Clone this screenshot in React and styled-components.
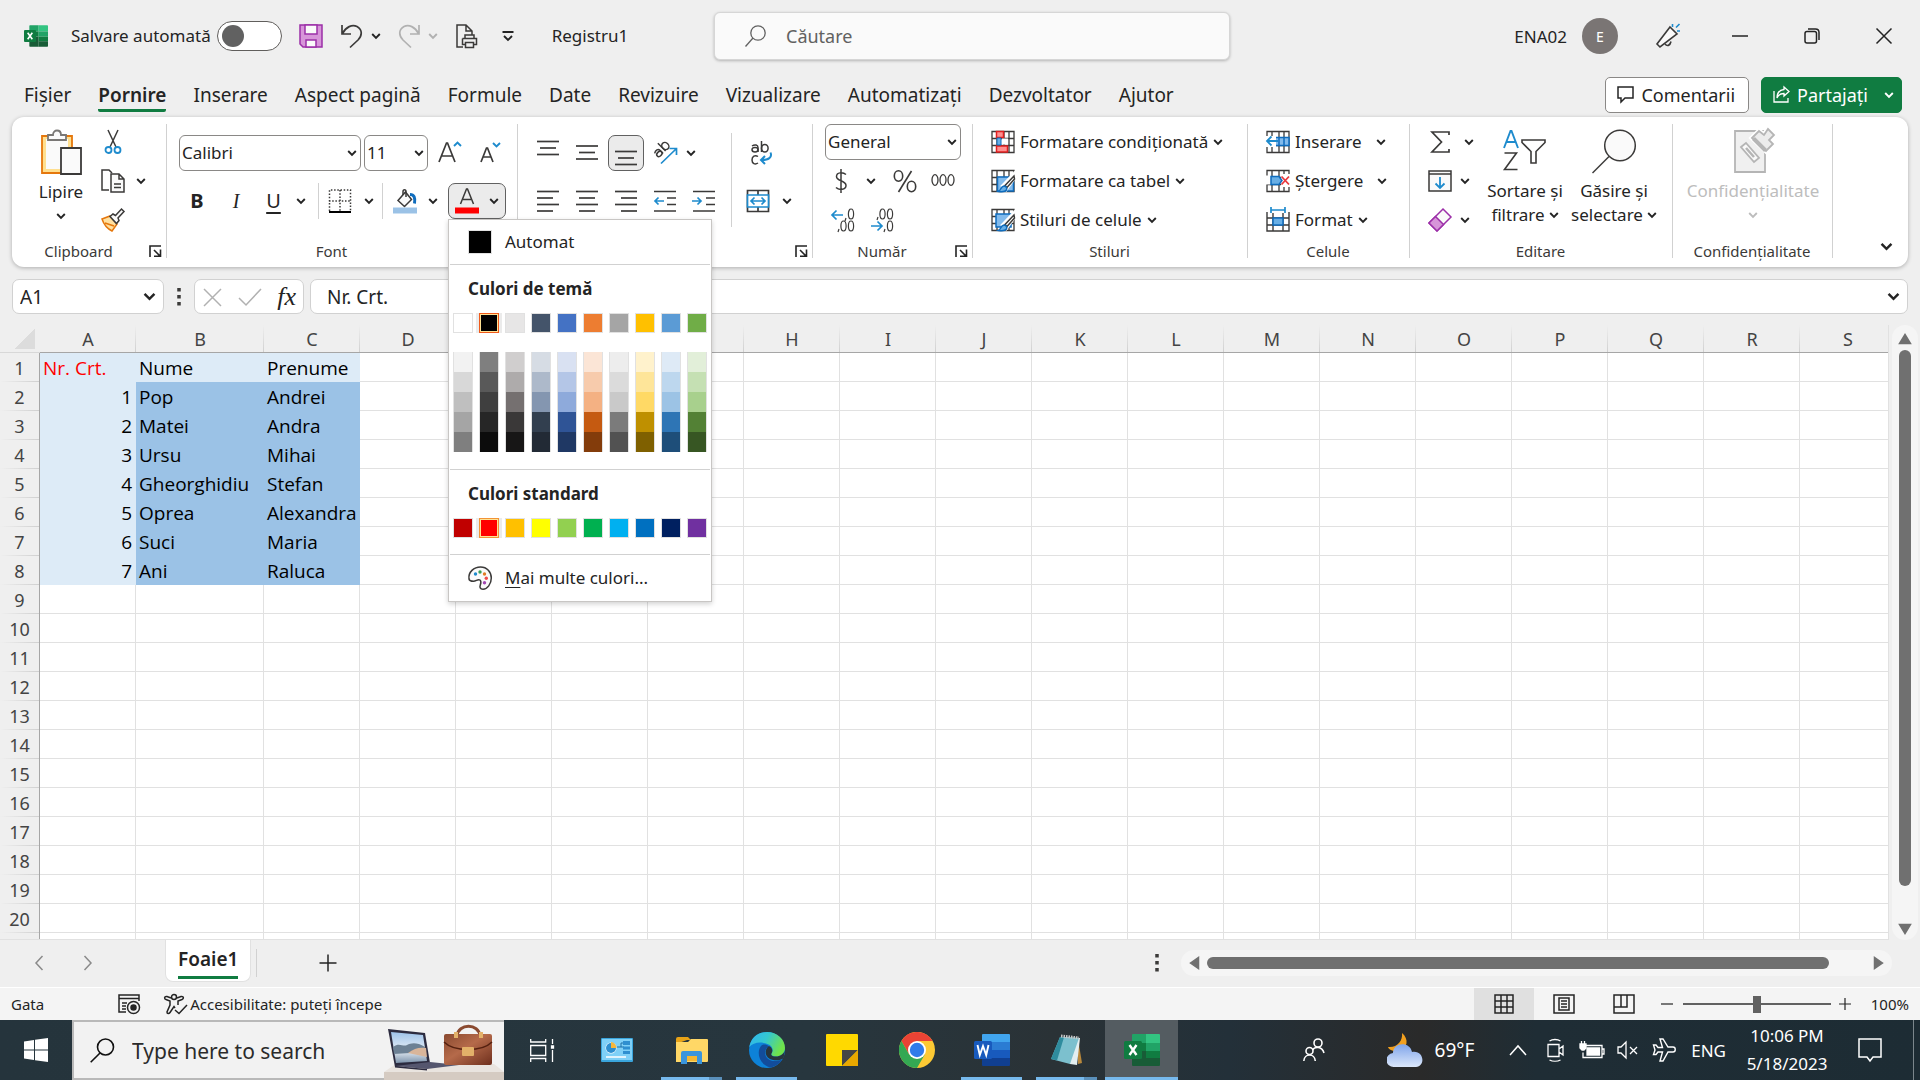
import React from "react";
import styled, { createGlobalStyle, css } from "styled-components";

const UI = '"Noto Sans", "Open Sans", sans-serif';
const CELL = '"Open Sans", "Noto Sans", sans-serif';
const INK = "#3b3a39";
const BLUE = "#1e8bcd";

const Global = createGlobalStyle`
  *, *::before, *::after { box-sizing: border-box; }
  body { margin: 0; background: #efefef; font-family: ${UI}; color: #242424; }
  button, input, select { font: inherit; color: inherit; margin: 0; padding: 0; border: 0; background: none; }
  svg { display: block; flex: none; }
`;

/* ---------- shell ---------- */
const Shell = styled.div`
  display: flex;
  flex-direction: column;
  height: 100vh;
  overflow: hidden;
`;
const Svg = styled.svg`
  fill: none;
  stroke: ${(p) => p.$c || INK};
  stroke-width: ${(p) => p.$sw || 1.5};
  overflow: visible;
`;
const Ico = ({ w = 24, h = w, vb, c, sw, children }) => (
  <Svg width={w} height={h} viewBox={vb || `0 0 ${w} ${h}`} $c={c} $sw={sw} aria-hidden="true">{children}</Svg>
);
const Chev = ({ c = "#242424", big }) => (
  <Ico w={big ? 13 : 10} h={big ? 13 : 10} vb="0 0 10 10" c={c} sw={1.9}><path d="M1.2 3l3.8 3.8L8.8 3" /></Ico>
);

/* ---------- title bar ---------- */
const TitleBar = styled.header`
  display: grid;
  grid-template-columns: minmax(0, 714fr) minmax(0, 516fr) minmax(0, 690fr);
  height: 72px;
  flex: none;
  align-items: center;
`;
const TitleLeft = styled.div`
  display: flex;
  align-items: center;
  padding-left: 24px;
  gap: 16px;
  font-size: 17px;
  line-height: 24px;
  white-space: nowrap;
`;
const AutoSave = styled.label`
  display: flex;
  align-items: center;
  gap: 6px;
  padding-left: 7px;
`;
const Toggle = styled.input`
  appearance: none;
  width: 65px;
  height: 30px;
  border: 1px solid #605e5c;
  border-radius: 15px;
  background: #fff;
  display: flex;
  align-items: center;
  padding: 0 4px;
  &::before { content: ""; width: 22px; height: 22px; border-radius: 50%; background: #616161; }
`;
const IconButton = styled.button`
  display: flex;
  align-items: center;
  justify-content: center;
  gap: ${(p) => p.$gap ?? 7}px;
  min-width: ${(p) => p.$w ?? 24}px;
  height: ${(p) => p.$h ?? 36}px;
  flex: none;
`;
const DocName = styled.span`padding-left: 16px;`;
const SearchBox = styled.label`
  display: flex;
  align-items: center;
  gap: 20px;
  height: 48px;
  padding-left: 30px;
  border: 1px solid #d6d6d6;
  border-radius: 6px;
  background: #fafafa;
  box-shadow: 0 1px 3px rgba(0, 0, 0, 0.25);
  input { flex: 1; min-width: 0; font-size: 18px; outline: 0; }
  input::placeholder { color: #616161; opacity: 1; }
`;
const TitleRight = styled.div`
  display: flex;
  align-items: center;
  justify-content: flex-end;
  padding-right: 24px;
  font-size: 17px;
  gap: 48px;
`;
const Account = styled.div`
  display: flex;
  align-items: center;
  gap: 15px;
  margin-right: -10px;
`;
const Avatar = styled.span`
  display: grid;
  place-items: center;
  width: 36px;
  height: 36px;
  border-radius: 50%;
  background: #7a7574;
  color: #fff;
  font-size: 14px;
`;

/* ---------- ribbon tabs ---------- */
const TabRow = styled.div`
  display: flex;
  align-items: center;
  height: 45px;
  flex: none;
  padding: 0 18px 0 11px;
`;
const Tabs = styled.nav`
  display: flex;
  flex: 1;
`;
const Tab = styled.button`
  padding: 4px 14px 0 13px;
  height: 40px;
  font-size: 19px;
  line-height: 28px;
  white-space: nowrap;
  font-weight: ${(p) => (p.$on ? 600 : 400)};
  span { display: block; border-bottom: 3px solid ${(p) => (p.$on ? "#107c41" : "transparent")}; border-radius: 2px; }
`;
const Actions = styled.div`
  display: flex;
  gap: 12px;
`;
const Action = styled.button`
  display: flex;
  align-items: center;
  gap: 7px;
  height: 36px;
  padding: 0 ${(p) => (p.$green ? 7 : 13)}px 0 11px;
  border: 1px solid ${(p) => (p.$green ? "#107c41" : "#8a8886")};
  border-radius: 5px;
  background: ${(p) => (p.$green ? "#107c41" : "#fff")};
  color: ${(p) => (p.$green ? "#fff" : "#242424")};
  font-size: 18px;
  svg:last-child:not(:first-child) { margin-left: 9px; }
`;

/* ---------- ribbon ---------- */
const Ribbon = styled.section`
  display: flex;
  flex: none;
  margin: 0 12px;
  padding: 5px 0 7px;
  border-radius: 12px;
  background: #fff;
  box-shadow: 0 1px 4px rgba(0, 0, 0, 0.28);
  font-size: 17px;
  line-height: 24px;
`;
const Group = styled.div`
  display: flex;
  flex-direction: column;
  height: 138px;
  width: ${(p) => p.$w}px;
  flex: none;
  background: linear-gradient(#d1d1d1, #d1d1d1) right 2px / 1px 134px no-repeat;
`;
const GroupBody = styled.div`
  display: flex;
  height: 120px;
  padding-left: ${(p) => p.$pl || 0}px;
`;
const GroupFoot = styled.div`
  display: grid;
  grid-template-columns: 1fr ${(p) => (p.$plain ? 0 : 20)}px;
  align-items: center;
  height: 18px;
  padding-right: 2px;
  font-size: 15px;
  line-height: 18px;
  color: #3b3a39;
  text-align: center;
`;
const Launcher = () => (
  <IconButton $w={14} $h={14} aria-label="Opțiuni">
    <Ico w={13} h={12} sw={1.6} c="#242424"><path d="M1 12V1h11M5 5l6 6M11.5 4.5v6.8H5" /></Ico>
  </IconButton>
);
const Col = styled.div`
  display: flex;
  flex-direction: column;
  padding-top: ${(p) => p.$pt || 0}px;
  gap: ${(p) => p.$gap || 0}px;
  margin-left: ${(p) => p.$ml || 0}px;
`;
const Line = styled.div`
  display: flex;
  align-items: center;
  height: ${(p) => p.$h || 39}px;
  gap: ${(p) => p.$gap ?? 3}px;
`;
const BigButton = styled.button`
  display: flex;
  flex-direction: column;
  align-items: center;
  width: ${(p) => p.$w}px;
  padding-top: 7px;
  color: ${(p) => (p.$off ? "#bdbdbd" : "#242424")};
  line-height: 24px;
  white-space: nowrap;
  > svg { margin-bottom: ${(p) => p.$mb ?? 6}px; }
`;
const BigLine = styled.span`
  display: flex;
  align-items: center;
  gap: 4px;
  height: 24px;
`;
const TextButton = styled.button`
  display: flex;
  align-items: center;
  height: 39px;
  gap: 5px;
  white-space: nowrap;
  svg:last-child { margin-left: ${(p) => p.$cg || 0}px; }
`;
const Letter = styled.span`
  font-size: 20px;
  line-height: 26px;
  ${(p) => p.$b && css`font-weight: 700;`}
  ${(p) => p.$i && css`font-style: italic; font-family: "Liberation Serif", serif;`}
  ${(p) => p.$u && css`text-decoration: underline; text-underline-offset: 4px;`}
`;
const SelectWrap = styled.div`
  display: grid;
  align-items: center;
  width: ${(p) => p.$w}px;
  height: 36px;
  border: 1px solid #8a8886;
  border-radius: 6px;
  select { grid-area: 1 / 1; appearance: none; height: 34px; padding-left: 2px; outline: 0; }
  svg { grid-area: 1 / 1; justify-self: end; margin-right: 3px; pointer-events: none; }
`;
const Select = ({ w, label, value }) => (
  <SelectWrap $w={w}>
    <select aria-label={label} defaultValue={value}><option>{value}</option></select>
    <Chev />
  </SelectWrap>
);
const Rule = styled.i`
  width: 1px;
  height: ${(p) => p.$h || 36}px;
  background: #d1d1d1;
  margin: ${(p) => p.$m || "0"};
`;
const Gap = styled.i`width: ${(p) => p.$w}px; flex: none;`;
const Boxed = styled(IconButton)`
  border: 1px solid #616161;
  border-radius: 7px;
  background: #ebebeb;
`;
const Fill = styled.div`flex: 1;`;
const Collapse = styled.button`
  align-self: flex-end;
  margin: 0 15px 7px 0;
`;

/* ---------- colour menu ---------- */
const MenuAnchor = styled.div`position: relative;`;
const Menu = styled.div`
  position: absolute;
  top: 36px;
  left: 0;
  z-index: 10;
  width: 264px;
  border: 1px solid #c8c6c4;
  background: #fff;
  box-shadow: 0 2px 5px rgba(0, 0, 0, 0.18);
  font-size: 17px;
`;
const MenuItem = styled.button`
  display: flex;
  align-items: center;
  gap: 13px;
  width: 100%;
  height: ${(p) => p.$h}px;
  padding-left: 19px;
  ${(p) => p.$ruled && css`background: linear-gradient(#d1d1d1, #d1d1d1) center top / 260px 1px no-repeat;`}
  u { text-underline-offset: 3px; }
`;
const AutoSwatch = styled.i`
  width: 24px;
  height: 24px;
  border: 1px solid #e1e1e1;
  background: #000;
`;
const MenuPart = styled.div`
  margin: 0 1px;
  padding: 0 3px ${(p) => p.$pb}px;
  border-top: 1px solid #d1d1d1;
`;
const MenuHead = styled.h3`
  margin: 0;
  padding-left: 15px;
  font-size: 17px;
  line-height: 48px;
  font-weight: 700;
`;
const Swatches = styled.div`
  display: grid;
  grid-template-columns: repeat(10, 20px);
  gap: 0 6px;
  margin-top: ${(p) => p.$mt || 0}px;
`;
const Swatch = styled.button`
  height: 20px;
  border: 1px solid #e1e1e1;
  border-width: ${(p) => (p.$tint ? "0 1px" : "1px")};
  background: ${(p) => p.$c};
  ${(p) => p.$on && css`
    border-color: ${p.$on};
    box-shadow: inset 0 0 0 1px #ffe294, -3px 0 0 #ebebeb, 3px 0 0 #ebebeb;
  `}
`;
const THEME = ["#ffffff", "#000000", "#e7e6e6", "#44546a", "#4472c4", "#ed7d31", "#a5a5a5", "#ffc000", "#5b9bd5", "#70ad47"];
const TINTS = [
  ["#f2f2f2", "#7f7f7f", "#d0cece", "#d6dce4", "#d9e1f2", "#fbe5d6", "#ededed", "#fff2cc", "#deeaf6", "#e2efd9"],
  ["#d8d8d8", "#595959", "#aeabab", "#adb9ca", "#b4c6e7", "#f7cbac", "#dbdbdb", "#fee599", "#bdd7ee", "#c5e0b3"],
  ["#bfbfbf", "#3f3f3f", "#757070", "#8496b0", "#8eaadb", "#f4b183", "#c9c9c9", "#ffd965", "#9cc3e5", "#a8d08d"],
  ["#a5a5a5", "#262626", "#3a3838", "#323f4f", "#2f5496", "#c55a11", "#7b7b7b", "#bf9000", "#2e75b5", "#538135"],
  ["#7f7f7f", "#0c0c0c", "#171616", "#222a35", "#1f3864", "#833c0b", "#525252", "#7f6000", "#1e4e79", "#375623"],
];
const STANDARD = ["#c00000", "#ff0000", "#ffc000", "#ffff00", "#92d050", "#00b050", "#00b0f0", "#0070c0", "#002060", "#7030a0"];

const ColorMenu = () => (
  <Menu>
    <MenuItem $h={44}><AutoSwatch />Automat</MenuItem>
    <MenuPart $pb={17}>
      <MenuHead>Culori de temă</MenuHead>
      <Swatches>{THEME.map((c, i) => <Swatch key={c} $c={c} $on={i === 1 && "#f05a1a"} aria-label={c} />)}</Swatches>
      <Swatches $mt={19}>{TINTS.flat().map((c, i) => <Swatch key={i} $tint $c={c} aria-label={c} />)}</Swatches>
    </MenuPart>
    <MenuPart $pb={16}>
      <MenuHead>Culori standard</MenuHead>
      <Swatches>{STANDARD.map((c, i) => <Swatch key={c} $c={c} $on={i === 1 && "#f29436"} aria-label={c} />)}</Swatches>
    </MenuPart>
    <MenuItem $h={47} $ruled>
      <Ico>
        <path fill="#fafafa" d="M1 13C0 6 6 1 12.500 1C19 1 23.300 6 23.300 12c0 6-4 11.200-8.300 11.200-3 0-3.500-2-2.700-4.200.8-2.300 1-4-.3-5-2-1.500-4 1.300-6.500 1.200C3 15.200 1.300 14.700 1 13z" />
        <g stroke="none"><circle cx="7.500" cy="8" r="1.700" fill={BLUE} /><circle cx="12" cy="6" r="1.700" fill="#3a9e55" /><circle cx="16.500" cy="8" r="1.700" fill="#e07b24" /><circle cx="18.300" cy="12.300" r="1.700" fill="#ef4b4b" /><circle cx="16.500" cy="16.800" r="1.700" fill="#a348b3" /></g>
      </Ico>
      <span><u>M</u>ai multe culori...</span>
    </MenuItem>
  </Menu>
);

/* ---------- formula bar ---------- */
const FormulaRow = styled.div`
  display: flex;
  align-items: center;
  flex: none;
  height: 35px;
  margin: 12px 12px 11px;
  font-size: 19px;
`;
const Field = styled.div`
  display: flex;
  align-items: center;
  justify-content: space-between;
  height: 35px;
  border: 1px solid #d1d1d1;
  border-radius: 7px;
  background: #fff;
  padding: 0 7px;
  ${(p) => (p.$w ? css`width: ${p.$w}px;` : css`flex: 1; padding-left: 16px;`)}
  input { flex: 1; min-width: 0; outline: 0; }
`;
const Fx = styled.span`
  font: italic 26px/30px "Liberation Serif", serif;
`;

/* ---------- sheet ---------- */
const SheetArea = styled.main`
  display: flex;
  flex: 1;
  min-height: 0;
`;
const GridClip = styled.div`
  flex: 1;
  min-width: 0;
  overflow: hidden;
  border-right: 1px solid #e1e1e1;
  border-bottom: 1px solid #e1e1e1;
  background: #fff;
`;
const Sheet = styled.table`
  table-layout: fixed;
  width: 1896px;
  border-collapse: separate;
  border-spacing: 0;
  font-family: ${CELL};
`;
const HeadCell = styled.th`
  height: 28px;
  padding: 2px 0 0;
  background: linear-gradient(to top, #d0d0d0, #efefef) right / 1px 100% no-repeat, #efefef;
  border-bottom: 1px solid #a6a6a6;
  font: 400 18px/25px ${UI};
  color: #444;
`;
const Corner = styled(HeadCell)`
  background: linear-gradient(135deg, transparent 50%, #dcdcdc 50%) 15px 4px / 20px 20px no-repeat, #efefef;
  border-bottom-color: #d8d8d8;
`;
const RowHead = styled.th`
  height: 29px;
  padding: 0;
  background: linear-gradient(to left, #d0d0d0, #efefef) bottom / 100% 1px no-repeat, #efefef;
  border-right: 1px solid #a6a6a6;
  font: 400 18px/26px ${UI};
  color: #444;
`;
const Cell = styled.td`
  height: 29px;
  padding: 2px 3px 0 3px;
  border-right: 1px solid ${(p) => p.$bg || "#e1e1e1"};
  border-bottom: 1px solid ${(p) => p.$bg || "#e1e1e1"};
  background: ${(p) => p.$bg || "#fff"};
  color: ${(p) => p.$fg || "#000"};
  text-align: ${(p) => (p.$num ? "right" : "left")};
  font-size: 19px;
  line-height: 25px;
  white-space: nowrap;
  overflow: visible;
`;
const COLS = "ABCDEFGHIJKLMNOPQRS".split("");
const DATA = [
  ["Nr. Crt.", "Nume", "Prenume"], [1, "Pop", "Andrei"], [2, "Matei", "Andra"], [3, "Ursu", "Mihai"],
  [4, "Gheorghidiu", "Stefan"], [5, "Oprea", "Alexandra"], [6, "Suci", "Maria"], [7, "Ani", "Raluca"],
];
const bgOf = (r, c) => (r > 7 || c > 2 ? undefined : r === 0 || c === 0 ? "#ddebf7" : "#9bc2e6");

const VScroll = styled.div`
  display: flex;
  flex-direction: column;
  align-items: center;
  gap: 5px;
  width: 26px;
  margin: 0 2px 0 3px;
  padding: 8px 0 5px;
  border-radius: 13px;
  background: #f5f5f5;
`;
const Thumb = styled.div`
  background: #707070;
  border-radius: 6px;
  ${(p) => (p.$h ? css`height: 12px; flex: 622;` : css`width: 12px; flex: 536;`)}
`;
const Rest = styled.div`flex: ${(p) => p.$f};`;

/* ---------- bottom bars ---------- */
const SheetBar = styled.div`
  display: flex;
  align-items: center;
  flex: none;
  height: 48px;
  border-bottom: 1px solid #fff;
  padding: 0 28px 2px 27px;
`;
const SheetTab = styled.button`
  align-self: flex-start;
  height: 42px;
  margin-left: 40px;
  padding: 1px 12px 0;
  border: 1px solid #e1e1e1;
  border-top: 0;
  border-radius: 0 0 8px 8px;
  background: #fff;
  font-size: 19px;
  line-height: 33px;
  font-weight: 600;
  span { display: block; border-bottom: 3px solid #107c41; }
`;
const HScroll = styled.div`
  display: flex;
  align-items: center;
  gap: 7px;
  height: 26px;
  width: 711px;
  padding: 0 8px;
  margin-left: 2px;
  border-radius: 13px;
  background: #f5f5f5;
`;
const Status = styled.footer`
  display: flex;
  align-items: center;
  flex: none;
  height: 32px;
  padding: 0 11px;
  background: #f4f4f4;
  font-size: 15px;
  white-space: nowrap;
`;
const ViewButton = styled(IconButton)`
  width: 60px;
  height: 32px;
  background: ${(p) => (p.$on ? "#e0e0e0" : "transparent")};
`;
const Zoom = styled.input`
  appearance: none;
  width: 148px;
  height: 18px;
  margin: 0 8px;
  background: linear-gradient(#616161, #616161) center / 100% 2px no-repeat;
  &::-webkit-slider-thumb { appearance: none; width: 8px; height: 17px; background: #616161; }
`;

/* ---------- taskbar ---------- */
const Taskbar = styled.nav`
  display: flex;
  align-items: center;
  flex: none;
  height: 60px;
  background: linear-gradient(90deg, #25343c 0, #27363e 42%, #2a3236 55%, #233039 64%, #2a2a2a 74%, #1f2d35 80%, #1d2c34 100%);
  color: #fff;
  font-size: 17px;
`;
const Start = styled(IconButton)`
  width: 72px;
  height: 60px;
`;
const TaskSearch = styled.label`
  display: flex;
  align-items: center;
  gap: 17px;
  width: 432px;
  height: 60px;
  padding-left: 16px;
  border: 2px solid #b9b9b9;
  border-right: 0;
  background: #f2f2f2;
  color: #242424;
  input { flex: 1; min-width: 0; padding-top: 2px; font-size: 21px; outline: 0; }
  input::placeholder { color: #2b2b2b; opacity: 1; }
`;
const Tasks = styled.div`
  display: flex;
  gap: 2px;
  flex: 1;
  padding-left: 1px;
`;
const Task = styled.button`
  display: grid;
  place-items: center;
  width: 73px;
  height: 60px;
  background:
    linear-gradient(90deg, #76b9ed ${(p) => (p.$split ? "78%" : "100%")}, #5a90bb 0) center bottom / ${(p) => (p.$on ? "100%" : "61px")} ${(p) => (p.$run ? 3 : 0)}px no-repeat,
    ${(p) => (p.$on ? "#545c61" : "transparent")};
`;
const Tray = styled.div`
  display: flex;
  align-items: center;
  white-space: nowrap;
`;
const Weather = styled.button`
  display: flex;
  align-items: center;
  gap: 12px;
  margin: 0 17px 0 61px;
  font-size: 19px;
`;
const Clock = styled.time`
  display: flex;
  flex-direction: column;
  align-items: center;
  gap: 4px;
  width: 90px;
  margin: 0 26px 0 16px;
  line-height: 24px;
`;
const Peek = styled.i`
  width: 1px;
  height: 60px;
  margin: 0 6px 0 31px;
  background: #7b868c;
`;

/* ---------- icons ---------- */
const ExcelLogo = ({ s = 24 }) => (
  <svg width={s} height={s} viewBox="0 0 36 36" aria-hidden="true">
    <path fill="#21a366" d="M8 3a1 1 0 0 1 1-1h13v9H8z" /><path fill="#33c481" d="M22 2h13a1 1 0 0 1 1 1v8H22z" />
    <path fill="#107c41" d="M8 11h14v8H8z" /><path fill="#21a366" d="M22 11h14v8H22z" /><path fill="#185c37" d="M8 19h14v15H9a1 1 0 0 1-1-1z" />
    <path fill="#107c41" d="M22 19h14v7H22z" /><path fill="#185c37" d="M22 26h14v7a1 1 0 0 1-1 1H22z" />
    <rect x="0" y="9" width="18" height="18" rx="1.500" fill="#107c41" />
    <path d="M5.500 13l7 10M12.500 13l-7 10" stroke="#fff" strokeWidth="2.400" />
  </svg>
);
const WordLogo = () => (
  <svg width="36" height="36" viewBox="0 0 36 36" aria-hidden="true">
    <path fill="#41a5ee" d="M8 3a1 1 0 0 1 1-1h26a1 1 0 0 1 1 1v7H8z" /><path fill="#2b7cd3" d="M8 10h28v8H8z" />
    <path fill="#185abd" d="M8 18h28v8H8z" /><path fill="#103f91" d="M8 26h28v7a1 1 0 0 1-1 1H9a1 1 0 0 1-1-1z" />
    <rect x="0" y="9" width="18" height="18" rx="1.500" fill="#185abd" />
    <path d="M3.500 13l2.300 10L9 14l3.200 9 2.300-10" stroke="#fff" strokeWidth="1.900" fill="none" />
  </svg>
);
const Lines = ({ rows, oy = 0 }) => (
  <Ico w={24} h={24} sw={1.7}>{rows.map(([a, b], i) => <path key={i} d={`M${a} ${oy + i * 6.500}H${b}`} />)}</Ico>
);
const tri = [[1, 23], [4, 20], [1, 23]];
const TableBase = () => <path d="M1 1.500h22v21H1zM1 8.500h22M1 15.500h22M6 1.500v21M13 1.500v21M18 1.500v21" strokeWidth="1.300" />;
const Brush = () => (
  <g><path d="M23.500 5L12 17l3 3 8.500-12z" fill="#fff" stroke="#fff" strokeWidth="4" /><path d="M23 7l-9 9.500 2 2L23.500 10z" fill="#fff" strokeWidth="1.500" /><path d="M13 17c2 0 3.500 2 2.500 4-1 1.500-5 2-8 1.500 2.500-1 2-5 5.500-5.500z" fill="#69afe5" stroke="#0f6cbd" /></g>
);
const Ab = (p) => (
  <g {...p}><path d="M3 5c3-2 6-1 6 1.500V11" /><ellipse cx="6" cy="8.700" rx="3" ry="2.200" /><path d="M12.500 0v11" /><ellipse cx="15.800" cy="7.300" rx="3.300" ry="3.800" /></g>
);
const Dec = ({ left }) => (
  <Ico w={24} h={24} sw={1.2}>
    {left ? <path d="M12 7H1M5.500 2.500L1 7l4.500 4.500" stroke={BLUE} strokeWidth="1.700" /> : <path d="M1 18h11M7.500 13.500L12 18l-4.500 4.500" stroke={BLUE} strokeWidth="1.700" />}
    {left ? <g><ellipse cx="20" cy="6" rx="2.600" ry="5" /><path d="M15 10l-1 3M8 21l-1 3" /><ellipse cx="12.500" cy="18" rx="2.600" ry="5" /><ellipse cx="20" cy="18" rx="2.600" ry="5" /></g>
      : <g><ellipse cx="12.500" cy="6" rx="2.600" ry="5" /><ellipse cx="20" cy="6" rx="2.600" ry="5" /><path d="M8 9l-1 3M15 21l-1 3" /><ellipse cx="20" cy="18" rx="2.600" ry="5" /></g>}
  </Ico>
);

const TABS = ["Fișier", "Pornire", "Inserare", "Aspect pagină", "Formule", "Date", "Revizuire", "Vizualizare", "Automatizați", "Dezvoltator", "Ajutor"];

export default function App() {
  return (
    <Shell>
      <Global />
      <TitleBar>
        <TitleLeft>
          <ExcelLogo />
          <AutoSave>Salvare automată<Toggle type="checkbox" role="switch" /></AutoSave>
          <IconButton $w={26} aria-label="Salvare">
            <Ico c="#9c2fa8"><path fill="#d795d9" d="M1 1h22v22H4l-3-3z" /><path fill="#fafafa" d="M6 1h12v9H6zM7 16h10v7H7z" /></Ico>
          </IconButton>
          <IconButton aria-label="Anulare">
            <Ico sw={1.700}><path d="M2 1v9h9M2.500 9.500C6 3 12 0 17 2.500 23 6 22 12 18 16l-8 7.500" /></Ico><Chev />
          </IconButton>
          <IconButton aria-label="Refacere">
            <Ico sw={1.700} c="#b1b1b1"><path d="M22 1v9h-9M21.500 9.500C18 3 12 0 7 2.500 1 6 2 12 6 16l8 7.500" /></Ico><Chev c="#b1b1b1" />
          </IconButton>
          <IconButton $w={26} aria-label="Imprimare">
            <Ico><path d="M8 23H2V1h9l6 6v4M11 1v6h6" /><path fill="#efefef" d="M10 14V11h9v3M7.500 14.500h14v6H19M10 20.500H7.500v-6M10.500 18.500h8v5h-8z" /></Ico>
          </IconButton>
          <IconButton aria-label="Particularizare"><Ico w={14} h={12} c="#242424" sw={1.900}><path d="M1.500 2h11M3 6l4 4 4-4" /></Ico></IconButton>
          <DocName>Registru1</DocName>
        </TitleLeft>
        <SearchBox>
          <Ico w={21} h={22} c="#616161" sw={1.300}><circle cx="13" cy="8" r="7.200" /><path d="M8 13L.5 21.500" /></Ico>
          <input placeholder="Căutare" aria-label="Căutare" />
        </SearchBox>
        <TitleRight>
          <Account>ENA02<Avatar>E</Avatar></Account>
          <IconButton aria-label="Noutăți">
            <Ico sw={1.600}><path fill="#fafafa" d="M14 3l7 7L4 23l-3-3z" /><path d="M9 20c2 2.500 5 2 6-2.500" /><path stroke={BLUE} d="M16.500 0v3M23.500 0l-3.500 3.500M21 7h3" /></Ico>
          </IconButton>
          <IconButton aria-label="Minimizare"><Ico w={16} h={16} c="#242424"><path d="M0 8h16" /></Ico></IconButton>
          <IconButton aria-label="Restabilire"><Ico w={16} h={16} c="#242424"><rect x="1" y="3.500" width="11.500" height="11.500" rx="2" /><path d="M4 1h7.500C14 1 15 2.500 15 4.500V12" /></Ico></IconButton>
          <IconButton aria-label="Închidere"><Ico w={16} h={16} c="#242424"><path d="M.5.5l15 15M15.500.5l-15 15" /></Ico></IconButton>
        </TitleRight>
      </TitleBar>

      <TabRow>
        <Tabs>{TABS.map((t, i) => <Tab key={t} $on={i === 1}><span>{t}</span></Tab>)}</Tabs>
        <Actions>
          <Action><Ico w={17} h={17} c="#242424"><path d="M1 1h15v11H8l-4 4v-4H1z" /></Ico>Comentarii</Action>
          <Action $green><Ico w={17} h={17} c="#fff" sw={1.300}><path d="M1 5v11h14v-4M11 1l5 4.500-5 4.500V7.500C8 7.500 5.500 8.500 4 12c0-5 2.500-8 7-8.500z" /></Ico>Partajați<Chev c="#fff" /></Action>
        </Actions>
      </TabRow>

      <Ribbon>
        <Group $w={155}>
          <GroupBody $pl={16}>
            <BigButton $w={66} $mb={5}>
              <Ico w={42} h={46} sw={1.800}>
                <path d="M2 7h30v37H2z" fill="#ffdf8f" stroke="#e5770c" /><path d="M6 10h22v30H6z" fill="#fafafa" stroke="none" />
                <path d="M8 11V6h5c0-6 8-6 8 0h5v5z" fill="#fafafa" stroke="#797775" /><path d="M21 19h20v26H21z" fill="#fafafa" stroke={INK} />
              </Ico>
              <span>Lipire</span><BigLine><Chev /></BigLine>
            </BigButton>
            <Col $ml={7}>
              <Line>
                <IconButton aria-label="Decupare"><Ico><path d="M7 0l8 17M17 0L9 17" /><g stroke={BLUE} strokeWidth="1.800"><circle cx="7.500" cy="20" r="3" /><circle cx="16.500" cy="20" r="3" /></g></Ico></IconButton>
              </Line>
              <Line>
                <IconButton $gap={11} aria-label="Copiere"><Ico><path d="M8 21H1V1h7l3 3" /><path fill="#fafafa" d="M10 5h8l5 5v13H10zM18 5v5h5M13 15h7M13 18.500h7" /></Ico><Chev /></IconButton>
              </Line>
              <Line>
                <IconButton aria-label="Descriptor de formate"><Ico><path d="M1 11l8-3 7 8-5 7c-4-2-8-6-10-12z" fill="#ffe0a0" stroke="#e5770c" /><path d="M4 15l9 3" stroke="#e5770c" /><path d="M9 8.500l3-2.500 2.500 1.500L20.500 1l2.500 2.500-6 6.500 1 2.500-2.500 3z" fill="#fafafa" /></Ico></IconButton>
              </Line>
            </Col>
          </GroupBody>
          <GroupFoot><span>Clipboard</span><Launcher /></GroupFoot>
        </Group>

        <Group $w={351}>
          <GroupBody $pl={12}>
            <Col $pt={13} $gap={12}>
              <Line $h={36}>
                <Select w={182} label="Font" value="Calibri" /><Select w={64} label="Dimensiune font" value="11" />
                <IconButton $w={38} aria-label="Mărire font"><Ico sw={1.700}><path d="M1 21L8.500 2h1L17 21M3.500 15h11" /><path stroke={BLUE} strokeWidth="1.900" d="M16 5l3.500-3.500L23 5" /></Ico></IconButton>
                <IconButton $w={36} aria-label="Micșorare font"><Ico sw={1.700}><path d="M3 21l5.500-14h1L15 21M5 16h8" /><path stroke={BLUE} strokeWidth="1.900" d="M15 2l3.500 3.500L22 2" /></Ico></IconButton>
              </Line>
              <Line $h={36}>
                <IconButton $w={36} aria-label="Aldin"><Letter $b>B</Letter></IconButton>
                <IconButton $w={36} aria-label="Cursiv"><Letter $i>I</Letter></IconButton>
                <IconButton $w={58} $gap={15} aria-label="Subliniat"><Letter $u>U</Letter><Chev /></IconButton>
                <Rule />
                <IconButton $w={57} $gap={12} aria-label="Borduri">
                  <Ico><path d="M1.500 22V1h21v21M12 1v21M1 12h22" strokeDasharray="1.500 1.700" /><path d="M1 23h22" stroke="#000" strokeWidth="2" /></Ico><Chev />
                </IconButton>
                <Rule />
                <IconButton $w={59} $gap={11} aria-label="Culoare de umplere">
                  <Ico><path fill="#fafafa" d="M5 11.500L12.500 3l6 7.500-7 7z" /><path d="M10 6V2.500C10 0 13 0 13 2.500V8" /><path d="M17 5.500c4 0 5.500 3 4.500 9" stroke="#0f6cbd" strokeWidth="3" /><path d="M0 21.500h24" stroke="#9bc2e6" strokeWidth="6" /></Ico><Chev />
                </IconButton>
                <MenuAnchor>
                  <Boxed $w={58} $gap={10} aria-label="Culoare font" aria-expanded="true">
                    <Ico><path d="M5.500 15L11.500 0h1l6 15M8 10.500h8" /><path d="M0 21.500h24" stroke="#f00" strokeWidth="6" /></Ico><Chev />
                  </Boxed>
                  <ColorMenu />
                </MenuAnchor>
              </Line>
            </Col>
          </GroupBody>
          <GroupFoot><span>Font</span><span /></GroupFoot>
        </Group>

        <Group $w={295}>
          <GroupBody $pl={12}>
            <Col $pt={13} $gap={12}>
              <Line $h={36}>
                <IconButton $w={36} aria-label="Aliniere sus"><Lines rows={tri} oy={0.5} /></IconButton>
                <IconButton $w={36} aria-label="Aliniere la mijloc"><Lines rows={tri} oy={5} /></IconButton>
                <Boxed $w={36} aria-label="Aliniere jos"><Lines rows={tri} oy={10.500} /></Boxed>
                <IconButton $w={55} $gap={9} aria-label="Orientare">
                  <Ico><Ab transform="translate(-4 11) rotate(-45)" /><path d="M8 22.500L23 8M16.500 7.500H23.500V14" stroke={BLUE} strokeWidth="1.700" /></Ico><Chev />
                </IconButton>
              </Line>
              <Line $h={36}>
                <IconButton $w={36} aria-label="Stânga"><Lines rows={[[1, 23], [1, 17], [1, 23], [1, 17]]} oy={2.500} /></IconButton>
                <IconButton $w={36} aria-label="Centru"><Lines rows={[[1, 23], [4, 20], [1, 23], [4, 20]]} oy={2.500} /></IconButton>
                <IconButton $w={36} aria-label="Dreapta"><Lines rows={[[1, 23], [7, 23], [1, 23], [7, 23]]} oy={2.500} /></IconButton>
                <IconButton $w={36} aria-label="Micșorare indent"><Ico sw={1.700}><path d="M1 2.500h22M14 9h9M14 15.500h9M1 22h22" /><path stroke={BLUE} d="M11 12H2M5.500 8.500L2 12l3.500 3.500" /></Ico></IconButton>
                <IconButton $w={36} aria-label="Mărire indent"><Ico sw={1.700}><path d="M1 2.500h22M14 9h9M14 15.500h9M1 22h22" /><path stroke={BLUE} d="M0 12h9M5.500 8.500L9 12l-3.500 3.500" /></Ico></IconButton>
              </Line>
            </Col>
            <Rule $h={94} $m="11px 0 0 9px" />
            <Col $pt={13} $gap={12} $ml={14}>
              <Line $h={36}>
                <IconButton $w={30} aria-label="Încadrare text"><Ico><Ab /><path d="M9 15.500c-3-2-6 0-6 3.500s3 5 6 3" /><path d="M21.500 11.500c2 5-2 7.500-9 7.500M16 15l-4 4 4 4" stroke={BLUE} strokeWidth="2" /></Ico></IconButton>
              </Line>
              <Line $h={36}>
                <IconButton $gap={12} aria-label="Îmbinare"><Ico sw={1.700}><path d="M1.500 1.500h21v21h-21zM12 1v5M12 18v5" /><path fill="#fff" stroke={BLUE} d="M1.500 6h21v12h-21zM5 12h14M8.500 8.500L5 12l3.500 3.500M15.500 8.500L19 12l-3.500 3.500" /></Ico><Chev /></IconButton>
              </Line>
            </Col>
          </GroupBody>
          <GroupFoot><span /><Launcher /></GroupFoot>
        </Group>

        <Group $w={160}>
          <GroupBody $pl={12}>
            <Col>
              <Line><Select w={136} label="Format număr" value="General" /></Line>
              <Line>
                <IconButton $w={60} $gap={18} aria-label="Format monedă"><Ico w={14} h={24}><path d="M12 5.500C9 3 2.500 3 2.500 7.500 2.500 12.500 12 11 12 16.500 12 21 5 21.500 2 18.500M7 0v24" /></Ico><Chev /></IconButton>
                <IconButton $w={34} aria-label="Procent"><Ico sw={1.600}><ellipse cx="5.500" cy="7" rx="4.200" ry="5.200" /><ellipse cx="18.500" cy="17.500" rx="4.200" ry="5.200" /><path d="M18.500 2l-13 21" /></Ico></IconButton>
                <IconButton $w={36} aria-label="Stil virgulă"><Ico w={24} h={14} sw={1.300}><ellipse cx="4" cy="6" rx="3" ry="5.300" /><ellipse cx="12" cy="6" rx="3" ry="5.300" /><ellipse cx="20" cy="6" rx="3" ry="5.300" /></Ico></IconButton>
              </Line>
              <Line><IconButton $w={36} aria-label="Mărire zecimale"><Dec left /></IconButton><IconButton $w={36} aria-label="Micșorare zecimale"><Dec /></IconButton></Line>
            </Col>
          </GroupBody>
          <GroupFoot><span>Număr</span><Launcher /></GroupFoot>
        </Group>

        <Group $w={275}>
          <GroupBody $pl={18}>
            <Col>
              <TextButton><Ico><TableBase /><g fill="#ff8f8f" stroke="#e02020"><path d="M5.500 1.500h7v6h-7zM5.500 16h11v6h-11z" /></g><path d="M6 8h4v7H6z" fill="#69afe5" stroke="#0f6cbd" strokeWidth="1" /><path d="M11 8.500h6v6h-6z" fill="#fff" stroke="none" /></Ico>Formatare condiționată<Chev /></TextButton>
              <TextButton><Ico><TableBase /><path d="M6.500 8h16v14h-16z" fill="#83bbec" stroke="#0f6cbd" /><Brush /></Ico>Formatare ca tabel<Chev /></TextButton>
              <TextButton><Ico><TableBase /><path d="M5 6h15v13H5z" fill="#83bbec" stroke="#0f6cbd" /><Brush /></Ico>Stiluri de celule<Chev /></TextButton>
            </Col>
          </GroupBody>
          <GroupFoot $plain><span>Stiluri</span></GroupFoot>
        </Group>

        <Group $w={162}>
          <GroupBody $pl={18}>
            <Col>
              <TextButton $cg={9}><Ico><TableBase /><path d="M8 7.500h15v8H8z" fill="#83bbec" stroke="#0f6cbd" /><path d="M13 7.500v8M18 7.500v8" stroke="#0f6cbd" /><path d="M-1 6h11v11H-1z" fill="#fff" stroke="none" /><path d="M12 11H1M5.500 6.500L1 11l4.500 4.500" stroke={BLUE} strokeWidth="1.800" /></Ico>Inserare<Chev /></TextButton>
              <TextButton $cg={9}><Ico><TableBase /><path d="M-1 6.500h6v9h-6zM15 5h10v13H15z" fill="#fff" stroke="none" /><path d="M5 7.500h8l3 4-3 4H5z" fill="#69afe5" stroke="#0f6cbd" /><path d="M15.500 7.500l7.500 8M23 7.500l-7.500 8" stroke="#e8383d" strokeWidth="1.800" /></Ico>Ștergere<Chev /></TextButton>
              <TextButton><Ico><path d="M1 4v19h22V4M1 10h22M1 17h22M7 5v18M17 5v18" strokeWidth="1.400" /><path d="M7 10h10v7H7z" fill="#69afe5" stroke="#0f6cbd" /><path d="M5 2h14M5-1v6M19-1v6" stroke={BLUE} strokeWidth="1.700" /></Ico>Format<Chev /></TextButton>
            </Col>
          </GroupBody>
          <GroupFoot $plain><span>Celule</span></GroupFoot>
        </Group>

        <Group $w={263}>
          <GroupBody $pl={18}>
            <Col>
              <Line><IconButton $gap={12} aria-label="Însumare automată"><Ico sw={1.700}><path d="M21 5V2H4l9.500 10L4 22h17v-3" /></Ico><Chev /></IconButton></Line>
              <Line><IconButton $gap={8} aria-label="Umplere"><Ico><path fill="#fafafa" d="M1 2h22v20H1zM1 5h22" /><path stroke={BLUE} strokeWidth="1.800" d="M12 8v11M7.500 14.500L12 19l4.500-4.500" /></Ico><Chev /></IconButton></Line>
              <Line><IconButton $gap={8} aria-label="Golire"><Ico c="#9c2fa8"><path fill="#fafafa" d="M15 1l8 8L9 23l-8-8z" /><path fill="#d795d9" d="M7.500 8.500l8 8L9 23l-8-8z" /></Ico><Chev /></IconButton></Line>
            </Col>
            <BigButton $w={102} $mb={4}>
              <Ico w={44} h={46} sw={1.600}><path stroke={BLUE} strokeWidth="1.900" d="M1 19L7.500 2h1L15 19M3.500 13h9" /><path d="M1.500 24h12L1.500 40.500h13M19 11h23v2.500l-9 9V34h-5V22.500l-9-9z" fill="none" /></Ico>
              <span>Sortare și</span><BigLine>filtrare<Chev /></BigLine>
            </BigButton>
            <BigButton $w={76} $mb={4}>
              <Ico w={46} h={46} sw={1.500}><circle cx="29" cy="16.500" r="15.300" fill="#fafafa" /><path d="M18 27.500L1.500 44" /></Ico>
              <span>Găsire și</span><BigLine>selectare<Chev /></BigLine>
            </BigButton>
          </GroupBody>
          <GroupFoot $plain><span>Editare</span></GroupFoot>
        </Group>

        <Group $w={160}>
          <GroupBody>
            <BigButton $w={160} $mb={4} $off disabled>
              <Ico w={40} h={46} vb="-1 0 40 46" c="#b5b5b5" sw={1.800}><path fill="#f0f0f0" d="M1 2h30v41H1z" /><path d="M7 18l5-4 13 15-5 4z" fill="#fafafa" /><path d="M12 19l8 9" strokeWidth="2.500" /><path fill="#e5e5e5" d="M18 9l7-7 5 4 4-6 6 6-5 5 4 4-7 7z" stroke="#fff" strokeWidth="5" /><path fill="#ececec" d="M18 9l7-7 5 4 4-6 6 6-5 5 4 4-7 7z" /><path d="M19.500 9.500l12 12" strokeWidth="4" /></Ico>
              <span>Confidențialitate</span><BigLine><Chev c="#bdbdbd" /></BigLine>
            </BigButton>
          </GroupBody>
          <GroupFoot $plain><span>Confidențialitate</span></GroupFoot>
        </Group>
        <Fill />
        <Collapse aria-label="Restrângere panglică"><Chev big /></Collapse>
      </Ribbon>

      <FormulaRow>
        <Field $w={152}><input aria-label="Casetă nume" defaultValue="A1" /><Chev big /></Field>
        <Ico w={30} h={18} sw={3.500}><path d="M15 0v3.500M15 7v3.500M15 14v3.500" /></Ico>
        <Field $w={110}>
          <Ico w={20} h={20} c="#b1b1b1"><path d="M2 2l17 17M19 2L2 19" /></Ico>
          <Ico w={24} h={18} c="#b1b1b1"><path d="M1 10l7 7L23 1" /></Ico>
          <Fx>fx</Fx>
        </Field>
        <Gap $w={6} />
        <Field><input aria-label="Bară de formule" defaultValue="Nr. Crt." /><Chev big /></Field>
      </FormulaRow>

      <SheetArea>
        <GridClip>
          <Sheet>
            <colgroup><col width="40" />{COLS.map((c) => <col key={c} width={c === "B" ? 128 : 96} />)}</colgroup>
            <thead><tr><Corner aria-label="Selectare totală" />{COLS.map((c) => <HeadCell key={c} scope="col">{c}</HeadCell>)}</tr></thead>
            <tbody>
              {Array.from({ length: 21 }, (_, r) => (
                <tr key={r}>
                  <RowHead scope="row">{r < 20 ? r + 1 : null}</RowHead>
                  {COLS.map((c, i) => (
                    <Cell key={c} $bg={bgOf(r, i)} $num={r > 0 && i === 0} $fg={r === 0 && i === 0 ? "#ff0000" : undefined}>{DATA[r]?.[i]}</Cell>
                  ))}
                </tr>
              ))}
            </tbody>
          </Sheet>
        </GridClip>
        <VScroll role="scrollbar" aria-orientation="vertical" aria-valuenow={0} aria-controls="root">
          <Ico w={14} h={12} c="#707070"><path fill="#707070" d="M7 1.500l5.500 9h-11z" /></Ico>
          <Thumb />
          <Rest $f={27} />
          <Ico w={14} h={12} c="#707070"><path fill="#707070" d="M7 10.500l5.500-9h-11z" /></Ico>
        </VScroll>
      </SheetArea>

      <SheetBar>
        <IconButton aria-label="Foaia anterioară"><Ico w={10} h={16} c="#8a8a8a"><path d="M8.500 1L2 8l6.500 7" /></Ico></IconButton>
        <IconButton $w={74} aria-label="Foaia următoare"><Ico w={10} h={16} c="#8a8a8a"><path d="M1.500 1L8 8l-6.500 7" /></Ico></IconButton>
        <SheetTab><span>Foaie1</span></SheetTab>
        <Rule $h={28} $m="0 0 0 5px" />
        <IconButton $w={142} aria-label="Foaie nouă"><Ico w={18} h={18} c="#242424"><path d="M9 .5v17M.5 9h17" /></Ico></IconButton>
        <Fill />
        <Ico w={30} h={18} sw={3.500}><path d="M8 0v3.500M8 7v3.500M8 14v3.500" /></Ico>
        <HScroll role="scrollbar" aria-orientation="horizontal" aria-valuenow={0} aria-controls="root">
          <Ico w={11} h={14} c="#707070"><path fill="#707070" d="M1.500 7l8-5.500v11z" /></Ico>
          <Thumb $h />
          <Rest $f={30} />
          <Ico w={11} h={14} c="#707070"><path fill="#707070" d="M9.500 7l-8-5.500v11z" /></Ico>
        </HScroll>
      </SheetBar>

      <Status>
        Gata
        <Gap $w={73} />
        <IconButton $h={30} aria-label="Înregistrare macrocomandă"><Ico w={23} h={20} c="#242424"><path d="M8 18H1V1h20v6M1 4.500h20M4 9h5M4 12h4M4 15h4" /><circle cx="15.500" cy="13.500" r="6" /><circle cx="15.500" cy="13.500" r="2.500" fill="#242424" /></Ico></IconButton>
        <Gap $w={23} />
        <IconButton $h={30} $gap={3}>
          <Ico w={23} h={20} c="#242424"><circle cx="10" cy="3" r="2.500" /><path d="M7 4L3 2.500C0 2 0 5 2 5.500l4 1.500v4l-3 7c0 2 2 2 3 .5l4-6 1 1.500M13 4l4-1.500c3-.5 3 2 1 3L14 7v4M11 16l4 3.500L23 11" /></Ico>
          Accesibilitate: puteți începe
        </IconButton>
        <Fill />
        <ViewButton $on aria-label="Normal"><Ico w={20} h={20} c="#242424"><path d="M1 1h18v18H1zM7 1v18M13 1v18M1 7h18M1 13h18" /></Ico></ViewButton>
        <ViewButton aria-label="Aspect pagină"><Ico w={20} h={20} c="#242424"><path d="M0 1h20v18H0zM5 4h10v12H5zM7 7h6M7 10h6M7 13h6" /></Ico></ViewButton>
        <ViewButton aria-label="Vizualizare întreruperi"><Ico w={20} h={20} c="#242424"><path d="M0 1h20v18H0zM7 1v12M13 1v12H0" /></Ico></ViewButton>
        <Gap $w={5} />
        <IconButton $w={16} $h={30} aria-label="Micșorare"><Ico w={12} h={12} c="#242424" sw={1.200}><path d="M0 6h12" /></Ico></IconButton>
        <Zoom type="range" min="10" max="190" defaultValue="100" aria-label="Zoom" />
        <IconButton $w={12} $h={30} aria-label="Mărire"><Ico w={12} h={12} c="#242424" sw={1.200}><path d="M0 6h12M6 0v12" /></Ico></IconButton>
        <Gap $w={20} />
        100%
      </Status>

      <Taskbar>
        <Start aria-label="Start"><Ico w={24} h={24} c="none"><path fill="#fff" d="M0 3.500L10 2v9.500H0zM11 1.800L24 0v11.500H11zM0 12.500h10V22L0 20.500zM11 12.500h13V24l-13-1.800z" /></Ico></Start>
        <TaskSearch>
          <Ico w={25} h={25} c="#111" sw={1.600}><circle cx="15.500" cy="9" r="8" /><path d="M10 15L.7 24.300" /></Ico>
          <input placeholder="Type here to search" aria-label="Type here to search" />
          <svg width="120" height="60" viewBox="0 0 120 60" aria-hidden="true">
            <defs>
              <linearGradient id="sky" x2="0" y2="1"><stop offset="0" stopColor="#9ec3ea" /><stop offset=".6" stopColor="#e6edf5" /><stop offset="1" stopColor="#7d93ab" /></linearGradient>
              <linearGradient id="bag" x2="1" y2="1"><stop offset="0" stopColor="#8a4a30" /><stop offset=".45" stopColor="#b56a4a" /><stop offset="1" stopColor="#6e2f1d" /></linearGradient>
            </defs>
            <path fill="#e9e4df" d="M12 44h98l10 8H0z" /><path fill="#d5cbc2" d="M0 52h120v8H0z" />
            <path fill="#2c2b3f" d="M4 9l37 4 5 30-35 4z" /><path fill="url(#sky)" d="M7 12l32 3 4 26-31 2z" />
            <path fill="#6c8094" d="M9 27c6-5 10 0 14-2s10-3 18 2l1 5-32 2z" /><path fill="#d9b59a" d="M24 33c6-5 12-6 18-5l1 9z" />
            <path fill="#55566e" d="M11 46l35-4 29 3-32 4z" /><path fill="#2c2b3f" d="M11 46l32 3v1.500L11 47.500z" />
            <path d="M73 16C74 3 95 3 96 16" fill="none" stroke="#8a4a30" strokeWidth="3" />
            <rect x="60" y="14" width="48" height="31" rx="2" fill="url(#bag)" /><path d="M60 22c10 10 38 10 48 0" fill="none" stroke="#54200f" strokeWidth="1.500" />
            <rect x="78" y="27" width="12" height="9" rx="1" fill="#e3b169" /><path fill="#e3b169" d="M70 12h4v6h-4zM95 12h4v6h-4z" />
          </svg>
        </TaskSearch>
        <Tasks>
          <Task aria-label="Task view"><Ico c="#fff" w={24} h={24} sw={1.300}><path d="M.7 1v3h15V1M.7 7.500h15v10H.7zM.7 24v-3.500h15V24M22.500 1v5M22.500 12v12" /><path fill="#fff" d="M21.500 8h2v2h-2z" /></Ico></Task>
          <Task aria-label="Panou de control">
            <svg width="32" height="24" viewBox="0 0 32 24"><rect width="32" height="24" rx="1" fill="#3aa5dc" /><rect x="1" y="1" width="30" height="21" fill="#7fd0f7" /><circle cx="10" cy="10" r="5.500" fill="#fff" /><circle cx="10" cy="10" r="5" fill="#2e8fd0" /><path fill="#f6b73c" d="M10 10V4a6 6 0 0 1 5.500 6z" /><path d="M16 9h4V5h3M20 9h3" stroke="#1d6fa8" fill="none" /><path fill="#2e8fd0" d="M22 3h7v4h-7zM22 8.500h7v3h-7zM22 13h7v3h-7z" /><path stroke="#fff" strokeWidth="1.500" d="M5 19h20" /></svg>
          </Task>
          <Task $run $split aria-label="File Explorer">
            <svg width="32" height="28" viewBox="0 0 32 28"><path fill="#e8a317" d="M0 3a2 2 0 0 1 2-2h10l3 3h-4L0 8z" /><path fill="#ffd766" d="M0 6h12l3-3h16a1 1 0 0 1 1 1v21a1 1 0 0 1-1 1H0z" /><path fill="#3a95dc" d="M5 17a2 2 0 0 1 2-2h17a2 2 0 0 1 2 2v11h-5v-8H11v8H5z" /><path fill="#f5b731" d="M11 20h10v5H11z" /></svg>
          </Task>
          <Task $run aria-label="Edge">
            <svg width="36" height="36" viewBox="0 0 36 36">
              <defs><linearGradient id="eg" x2="1" y2=".4"><stop offset="0" stopColor="#2fb4f2" /><stop offset=".5" stopColor="#34c7d0" /><stop offset="1" stopColor="#6fe34b" /></linearGradient></defs>
              <circle cx="18" cy="18" r="18" fill="#0d82d8" /><path fill="url(#eg)" d="M.3 15C2 5 9 0 18 0c10 0 18 7 18 16 0 6-5 8.500-9 8.500-5 0-5.500-2-4-4 2-4-1-8-6-9C10 9.500 4 11 .3 15z" />
              <path fill="#124c9b" d="M13 13c-6 5-4 19 8 22.500 5-.5 10-4 12-8-9 4-17 0-17-7 0-3 2-5 4-6-2-2-5-2.500-7-1.500z" />
              <path fill="#27353d" d="M20 14c-5 3-5 12 4 14 5 1 8-.5 10.500-1.500L36 18c-1 4-5 6.500-9 6.500-5 0-5.500-2-4-4 1-2.500 0-5-3-6.500z" />
            </svg>
          </Task>
          <Task aria-label="Note"><svg width="32" height="32" viewBox="0 0 32 32"><path fill="#ffd900" d="M1 0h30a1 1 0 0 1 1 1v30a1 1 0 0 1-1 1H1a1 1 0 0 1-1-1V1a1 1 0 0 1 1-1z" /><path fill="#454545" d="M16 32V16h16z" /><path fill="#e9a800" d="M32 16v16H16z" /></svg></Task>
          <Task aria-label="Chrome">
            <svg width="36" height="36" viewBox="0 0 36 36"><circle cx="18" cy="18" r="18" fill="#fcc934" /><path fill="#ea4335" d="M2.400 9A18 18 0 0 1 33.600 9H18l-7.800 13.500z" /><path fill="#34a853" d="M2.400 9A18 18 0 0 0 18 36l7.800-13.500H10.200z" /><circle cx="18" cy="18" r="9" fill="#fff" /><circle cx="18" cy="18" r="7.200" fill="#2f7bea" /></svg>
          </Task>
          <Task $run aria-label="Word"><WordLogo /></Task>
          <Task $run $split aria-label="Notepad">
            <svg width="34" height="32" viewBox="0 0 34 32"><path fill="#b8883c" d="M28 5l4 24-4 1z" /><path fill="#e3eef0" d="M11 3l19 1-3 27-7-1z" /><path fill="#7cc0ce" d="M10 3l19 1-9 26L1 25z" /><path fill="#2f8c9e" d="M10 3l4 .3L7 26.500 1 25z" /><path stroke="#c8c8c8" strokeWidth="3" strokeDasharray="1.500 1" d="M11 2l18 2" /></svg>
          </Task>
          <Task $run $on aria-label="Excel"><ExcelLogo s={36} /></Task>
        </Tasks>
        <Tray>
          <IconButton aria-label="Persoane"><Ico c="#fff" w={22} h={24} sw={1.600}><circle cx="15" cy="5" r="4" /><circle cx="6.500" cy="13" r="3.500" /><path d="M9.500 12c2-3.500 9.500-4 11.500 3M.8 23c.5-8 11-8 11.500 0" /></Ico></IconButton>
          <Weather>
            <svg width="36" height="36" viewBox="0 0 36 36" aria-hidden="true"><defs><linearGradient id="cl" x2="0" y2="1"><stop offset="0" stopColor="#7fa4ea" /><stop offset="1" stopColor="#dce8fb" /></linearGradient></defs><path fill="#f2a01f" d="M15 1c7 6 6 15-3 18C7 20 2 18 1 15c9 1 15-6 14-14z" /><path fill="url(#cl)" d="M7 35a7 7 0 0 1-1-14c0-11 17-12 19-1 12-2 14 14 4 15z" /></svg>
            69°F
          </Weather>
          <IconButton $w={54} aria-label="Pictograme ascunse"><Ico c="#fff" w={18} h={12}><path d="M1 11l8-9 8 9" /></Ico></IconButton>
          <IconButton $w={22} aria-label="Cameră"><Ico c="#fff" w={18} h={22} sw={1.300}><path d="M1 5.500h11v12H1zM12 10l4-3v9l-4-3M2.500 2c3-2 8-2 11 0M2.500 21c3 1.500 8 1.500 11 0" /></Ico></IconButton>
          <IconButton $w={50} aria-label="Baterie"><Ico c="#fff" w={26} h={18} sw={1.300}><path d="M7 4.500h16v12H4v-5M23 8h2v5h-2" /><path fill="#fff" d="M8 7h12.500v7H8z" /><path fill="#fff" d="M1 3h6v4L5 9H3L1 7zM2.500 0v3M5.500 0v3" /></Ico></IconButton>
          <IconButton $w={20} aria-label="Volum"><Ico c="#fff" w={20} h={18} sw={1.300}><path d="M1 6h3l5-5v16l-5-5H1zM13 6l7 7M20 6l-7 7" /></Ico></IconButton>
          <IconButton $w={54} aria-label="Mod avion"><Ico c="#fff" w={24} h={24} sw={1.400}><path d="M8 1h3l5 8h5c3 0 3 5 0 5h-5l-5 9H8l2.500-9H6l-2 2.500H1.500L3 12 1.500 7H4l2 2.500h4.500z" /></Ico></IconButton>
          ENG
          <Clock><span>10:06 PM</span><span>5/18/2023</span></Clock>
          <IconButton aria-label="Notificări"><Ico c="#fff" w={24} h={24}><path d="M1 1h22v18h-8l-3 4-3-4H1z" /></Ico></IconButton>
          <Peek />
        </Tray>
      </Taskbar>
    </Shell>
  );
}
